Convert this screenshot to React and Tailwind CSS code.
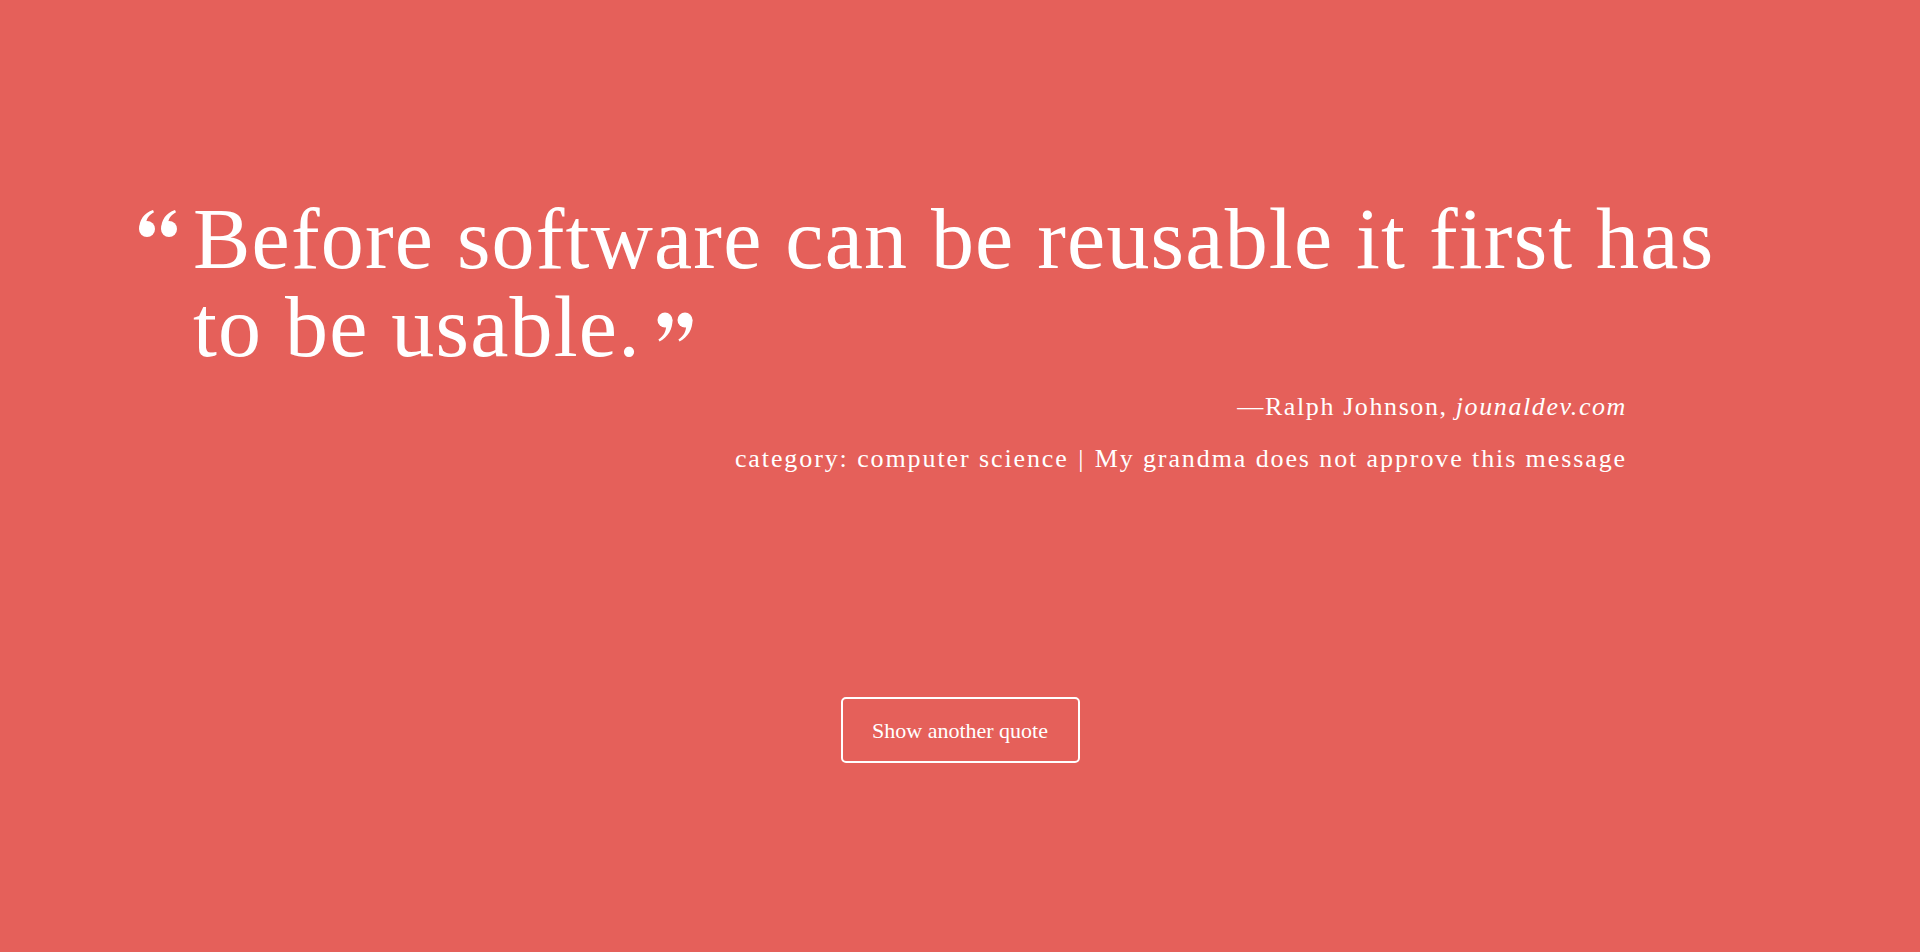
const serif = { fontFamily: '"Liberation Serif", "DejaVu Serif", serif' }

const OpenQuote = () => (
  <svg width="40" height="28" viewBox="0 0 40 28" className="shrink-0 fill-white">
    <circle cx="9" cy="19" r="8" />
    <path d="M1.3 19.5 C1 10 6 3 15 0 L16 2.2 C10.5 5 8 9.5 8.2 14 Z" />
    <circle cx="31" cy="19" r="8" />
    <path d="M23.3 19.5 C23 10 28 3 37 0 L38 2.2 C32.5 5 30 9.5 30.2 14 Z" />
  </svg>
)

const CloseQuote = () => (
  <svg width="37" height="30" viewBox="0 0 37 30" className="inline fill-white">
    <circle cx="8" cy="8" r="7.5" />
    <path d="M15.4 7.5 C15.8 17 11 25 2.5 29.5 L1.4 27.5 C6.5 24 9 19.5 9 15 Z" />
    <circle cx="28" cy="8" r="7.5" />
    <path d="M35.4 7.5 C35.8 17 31 25 22.5 29.5 L21.4 27.5 C26.5 24 29 19.5 29 15 Z" />
  </svg>
)

export default function App() {
  return (
    <div className="min-h-screen w-full bg-[#e5605a] text-white" style={serif}>
      <div className="flex pt-[195px] pl-[138px]">
        <div className="pt-[15px] w-[55px]">
          <OpenQuote />
        </div>
        <blockquote className="w-[1570px] text-[86px] leading-[88px] tracking-[1.2px]">
          Before software can be reusable it first has to be usable.
          <span className="relative top-[-9px] ml-[16px] inline-block leading-none">
            <CloseQuote />
          </span>
        </blockquote>
      </div>

      <div className="mt-5 pr-[293px] text-right text-[26px] leading-[32px]">
        <p className="tracking-[1.6px]">
          —Ralph Johnson, <em>jounaldev.com</em>
        </p>
        <p className="mt-5 tracking-[1.9px]">
          category: computer science <span className="mx-[1px]">|</span> My grandma does not approve this message
        </p>
      </div>

      <div className="mt-[222px] flex justify-center">
        <button className="h-[66px] w-[239px] rounded-[5px] border-2 border-white text-[22px] text-white">
          Show another quote
        </button>
      </div>
    </div>
  )
}
